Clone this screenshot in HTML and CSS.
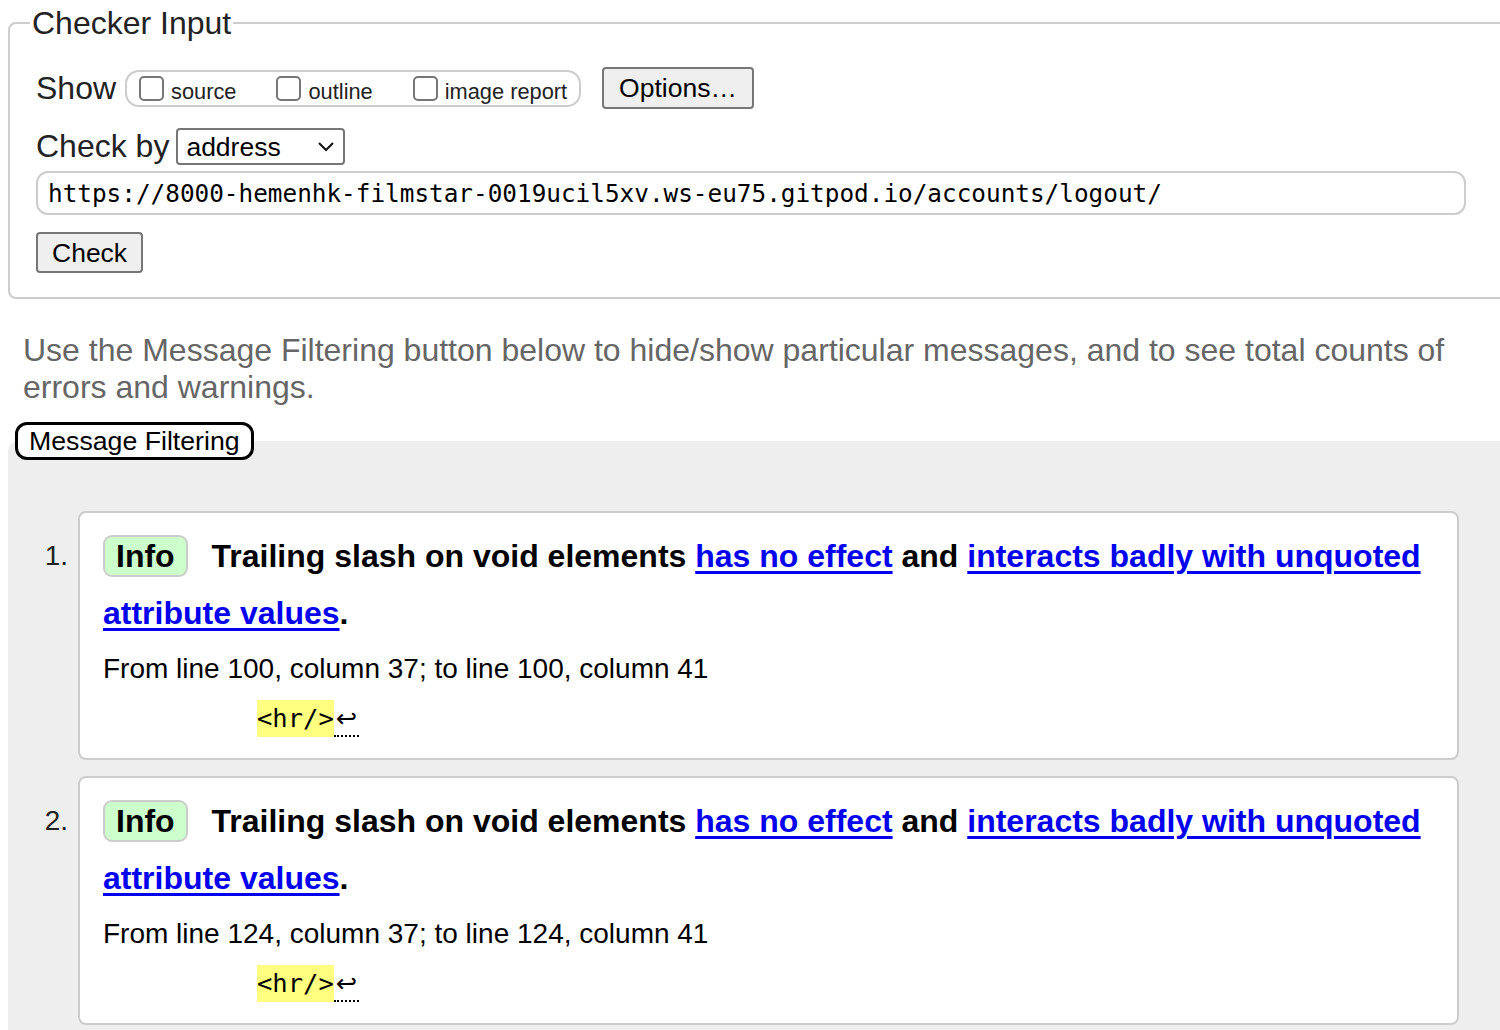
FILE: index.html
```html
<!DOCTYPE html>
<html lang="en">
<head>
<meta charset="utf-8">
<title>Nu Html Checker</title>
<link rel="stylesheet" href="styles.css">
</head>
<body>
<form class="checker">
  <fieldset class="input-set">
    <legend class="input-legend">Checker Input</legend>
    <div class="row show-row">
      <span class="row-label">Show</span>
      <span class="checks">
        <label class="check-item"><input type="checkbox" class="box"><span>source</span></label>
        <label class="check-item"><input type="checkbox" class="box"><span>outline</span></label>
        <label class="check-item"><input type="checkbox" class="box"><span>image report</span></label>
      </span>
      <button type="button" class="btn options-btn">Options…</button>
    </div>
    <div class="row by-row">
      <span class="row-label">Check by</span>
      <span class="select-wrap">
        <select class="select"><option>address</option></select>
        <svg class="chev" width="18" height="12" viewBox="0 0 18 12"><path d="M2 2 L9 9 L16 2" fill="none" stroke="#111" stroke-width="2"/></svg>
      </span>
    </div>
    <div class="row url-row">
      <input class="url" type="text" value="https://8000-hemenhk-filmstar-0019ucil5xv.ws-eu75.gitpod.io/accounts/logout/">
    </div>
    <div class="row submit-row">
      <button type="button" class="btn check-btn">Check</button>
    </div>
  </fieldset>
</form>

<p class="hint">Use the Message Filtering button below to hide/show particular messages, and to see total counts of errors and warnings.</p>

<fieldset class="filters">
  <legend class="filters-legend"><button type="button" class="filter-btn">Message Filtering</button></legend>
  <ol class="messages">
    <li class="msg">
      <span class="num">1.</span>
      <div class="card">
        <p class="msg-text"><strong class="badge">Info</strong> <span class="bold">Trailing slash on void elements <a href="#">has no effect</a> and <a href="#">interacts badly with unquoted attribute values</a>.</span></p>
        <p class="location">From line 100, column 37; to line 100, column 41</p>
        <p class="extract"><code><b class="hl">&lt;hr/&gt;</b><span class="lf">↩</span></code></p>
      </div>
    </li>
    <li class="msg">
      <span class="num">2.</span>
      <div class="card">
        <p class="msg-text"><strong class="badge">Info</strong> <span class="bold">Trailing slash on void elements <a href="#">has no effect</a> and <a href="#">interacts badly with unquoted attribute values</a>.</span></p>
        <p class="location">From line 124, column 37; to line 124, column 41</p>
        <p class="extract"><code><b class="hl">&lt;hr/&gt;</b><span class="lf">↩</span></code></p>
      </div>
    </li>
  </ol>
</fieldset>
</body>
</html>
```
FILE: styles.css
```css
html {
  overflow: hidden;
  background: #fff;
}
body {
  margin: 8px;
  width: 1520px;
  font-family: "Liberation Sans", Arial, sans-serif;
  color: #222;
}
.checker {
  margin: 0;
}
.input-set {
  margin: 0;
  border: 2px solid #ccc;
  border-radius: 8px;
  padding: 0 0 24px 26px;
}
.input-legend {
  font-size: 32px;
  line-height: 30px;
  padding: 0 2px;
  margin-left: -6px;
  color: #222;
}
.row {
  display: flex;
  align-items: center;
}
.row-label {
  font-size: 32px;
  color: #222;
}
.show-row {
  margin-top: 29px;
  height: 42px;
}
.checks {
  display: inline-flex;
  align-items: center;
  gap: 40px;
  margin-left: 9px;
  height: 37px;
  box-sizing: border-box;
  border: 2px solid #ccc;
  border-radius: 14px;
  padding: 0 12px 0 12px;
}
.check-item {
  display: inline-flex;
  align-items: flex-end;
  gap: 7px;
  font-size: 21.8px;
  color: #222;
}
.check-item span {
  line-height: 22px;
  position: relative;
  top: 2px;
}
.box {
  appearance: none;
  -webkit-appearance: none;
  margin: 0;
  width: 25px;
  height: 25px;
  box-sizing: border-box;
  border: 2px solid #767676;
  border-radius: 5px;
  background: #fff;
}
.btn {
  font-family: "Liberation Sans", Arial, sans-serif;
  font-size: 26.5px;
  color: #000;
  background: #efefef;
  border: 2px solid #767676;
  border-radius: 4px;
  box-sizing: border-box;
  line-height: 30px;
  margin: 0;
}
.options-btn {
  margin-left: 21px;
  height: 42px;
  padding: 0 15px;
}
.by-row {
  margin-top: 19px;
  height: 37px;
}
.select-wrap {
  position: relative;
  display: inline-block;
  margin-left: 7px;
}
.select {
  appearance: none;
  -webkit-appearance: none;
  display: block;
  width: 169px;
  height: 37px;
  box-sizing: border-box;
  border: 2px solid #767676;
  border-radius: 4px;
  background: #fff;
  font-family: "Liberation Sans", Arial, sans-serif;
  font-size: 26.5px;
  color: #000;
  padding: 0 0 0 8px;
  margin: 0;
}
.chev {
  position: absolute;
  right: 10px;
  top: 13px;
  pointer-events: none;
}
.url-row {
  margin-top: 6px;
}
.url {
  width: 1430px;
  height: 44px;
  box-sizing: border-box;
  border: 2px solid #ccc;
  border-radius: 12px;
  padding: 0 10px;
  font-family: "DejaVu Sans Mono", "Liberation Mono", monospace;
  font-size: 24.35px;
  color: #000;
  margin: 0;
}
.submit-row {
  margin-top: 17px;
}
.check-btn {
  height: 41px;
  padding: 0 14px;
}
.hint {
  margin: 33px 0 0 15px;
  width: 1460px;
  font-size: 32px;
  line-height: 37px;
  color: #666;
}
.filters {
  margin: 16px 0 0 0;
  border: 0;
  border-radius: 10px;
  background: #eee;
  padding: 0;
  min-height: 700px;
}
.filters-legend {
  margin-left: 7px;
  padding: 0;
}
.filter-btn {
  display: block;
  height: 38px;
  box-sizing: border-box;
  border: 3px solid #000;
  border-radius: 12px;
  background: #fff;
  font-family: "Liberation Sans", Arial, sans-serif;
  font-size: 26.7px;
  line-height: 30px;
  color: #000;
  padding: 0 11px;
  margin: 0;
}
.messages {
  list-style: none;
  margin: 51px 0 0 0;
  padding: 0;
  display: flex;
  flex-direction: column;
  gap: 16px;
}
.msg {
  display: flex;
  align-items: flex-start;
}
.num {
  width: 60px;
  flex: none;
  text-align: right;
  padding-right: 10px;
  font-size: 28px;
  line-height: 57px;
  margin-top: 16px;
  color: #222;
}
.card {
  width: 1381px;
  box-sizing: border-box;
  background: #fff;
  border: 2px solid #ccc;
  border-radius: 8px;
  padding: 15px 20px 14px 23px;
}
.msg-text {
  margin: 0;
  font-size: 32px;
  line-height: 57px;
  color: #000;
}
.bold {
  font-weight: bold;
}
.msg-text a {
  color: #0000ee;
  text-decoration: underline;
  text-decoration-thickness: 3px;
  text-underline-offset: 4px;
}
.badge {
  display: inline-block;
  line-height: 36px;
  padding: 1px 11px;
  border: 2px solid #ccc;
  border-radius: 9px;
  background: #ccffcc;
  margin-right: 15px;
}
.location {
  margin: 0;
  font-size: 28px;
  line-height: 54px;
  color: #000;
}
.extract {
  margin: 0;
  padding-left: 154px;
  line-height: 44px;
}
.extract code {
  font-family: "DejaVu Sans Mono", "Liberation Mono", monospace;
  font-size: 25.5px;
  color: #000;
}
.hl {
  font-weight: normal;
  background: #ffff80;
  padding: 3px 0 4px;
}
.lf {
  font-family: "DejaVu Sans", sans-serif;
  border-bottom: 2px dotted #000;
  padding: 0 2px 2px 2px;
}
```
